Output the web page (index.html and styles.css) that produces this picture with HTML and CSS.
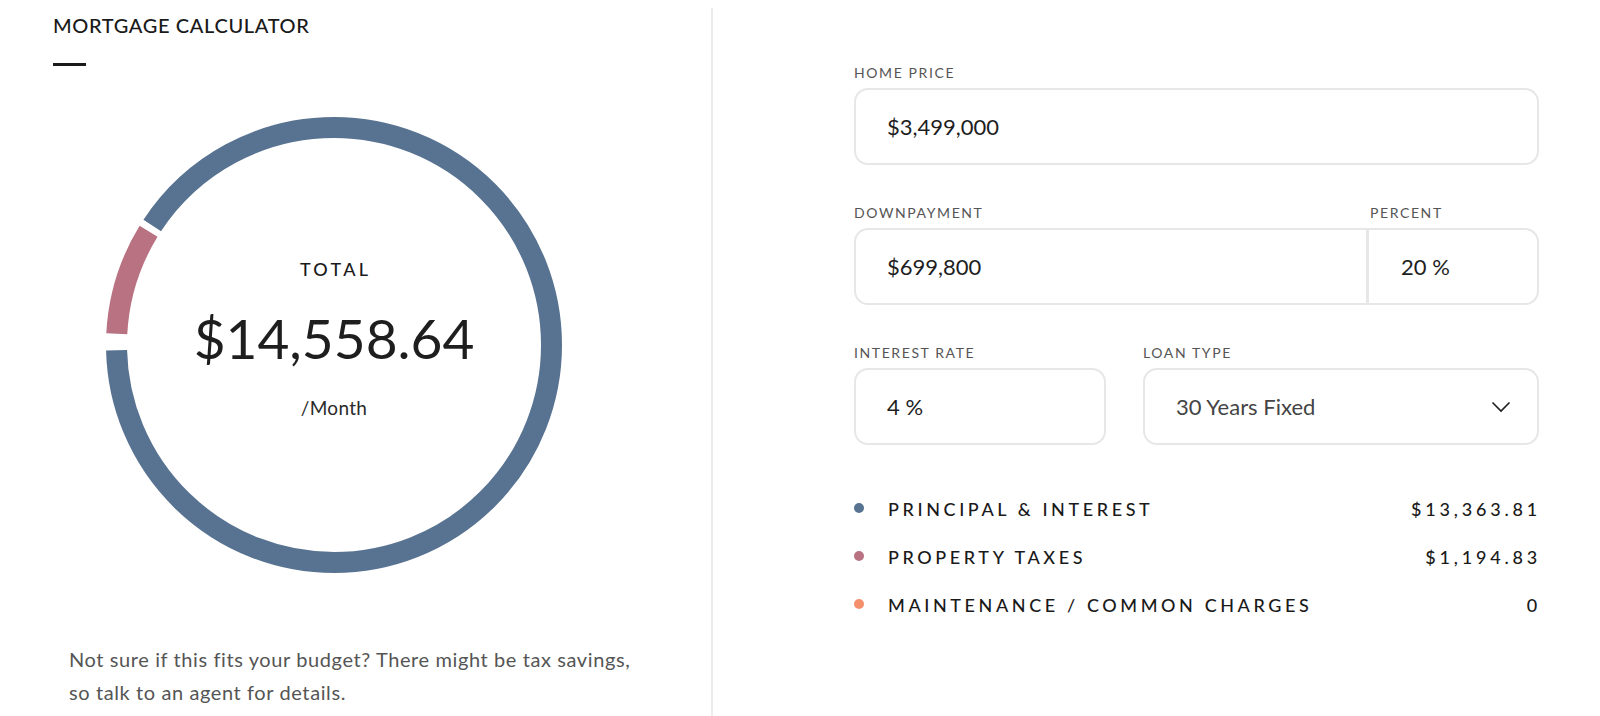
FILE: index.html
```html
<!DOCTYPE html>
<html lang="en">
<head>
<meta charset="utf-8">
<title>Mortgage Calculator</title>
<link rel="stylesheet" href="styles.css">
</head>
<body>
<div class="page">
  <section class="left">
    <h1 class="title">MORTGAGE CALCULATOR</h1>
    <div class="dash"></div>
    <div class="chart">
      <svg class="ring" viewBox="0 0 460 460" width="460" height="460">
        <g transform="rotate(180 230 230)">
          <circle class="seg seg-pink" cx="230" cy="230" r="217.5" stroke-dasharray="108.2 1258.4" stroke-dashoffset="-11.4"/>
          <circle class="seg seg-blue" cx="230" cy="230" r="217.5" stroke-dasharray="1234.4 132.2" stroke-dashoffset="-126.4"/>
        </g>
      </svg>
      <div class="total-label">TOTAL</div>
      <div class="total-amount">$14,558.64</div>
      <div class="total-unit">/Month</div>
    </div>
    <p class="note">Not sure if this fits your budget? There might be tax savings,<br>so talk to an agent for details.</p>
  </section>
  <div class="divider"></div>
  <section class="right">
    <div class="field">
      <div class="label">HOME PRICE</div>
      <div class="box"><span class="value">$3,499,000</span></div>
    </div>
    <div class="field">
      <div class="split-labels">
        <div class="label">DOWNPAYMENT</div>
        <div class="label">PERCENT</div>
      </div>
      <div class="box box-split">
        <div class="cell"><span class="value">$699,800</span></div>
        <div class="cell cell-percent"><span class="value">20 %</span></div>
      </div>
    </div>
    <div class="field-row">
      <div class="field">
        <div class="label">INTEREST RATE</div>
        <div class="box"><span class="value">4 %</span></div>
      </div>
      <div class="field">
        <div class="label">LOAN TYPE</div>
        <div class="box box-select">
          <span class="value value-select">30 Years Fixed</span>
          <svg class="chevron" width="20" height="12" viewBox="0 0 20 12"><path d="M1.5 1.5 L10 10 L18.5 1.5" fill="none" stroke="#1e1e1e" stroke-width="1.6"/></svg>
        </div>
      </div>
    </div>
    <ul class="legend">
      <li class="legend-row"><span class="dot dot-blue"></span><span class="legend-name">PRINCIPAL &amp; INTEREST</span><span class="legend-val">$13,363.81</span></li>
      <li class="legend-row"><span class="dot dot-pink"></span><span class="legend-name">PROPERTY TAXES</span><span class="legend-val">$1,194.83</span></li>
      <li class="legend-row"><span class="dot dot-orange"></span><span class="legend-name">MAINTENANCE / COMMON CHARGES</span><span class="legend-val">0</span></li>
    </ul>
  </section>
</div>
</body>
</html>
```

FILE: styles.css
```css
* { box-sizing: border-box; }

html, body {
  margin: 0;
  padding: 0;
  background: #ffffff;
}

body {
  font-family: "Lato", "Noto Sans", "Liberation Sans", sans-serif;
  color: #1e1e1e;
}

.page {
  display: grid;
  grid-template-columns: 711px 2px 1fr;
  min-height: 716px;
}

/* Left column */
.left {
  padding: 13px 0 0 53px;
}

.title {
  margin: 0;
  font-size: 20px;
  line-height: 24px;
  font-weight: 500;
  letter-spacing: 0.65px;
  color: #1a1a1a;
}

.dash {
  width: 33px;
  height: 3px;
  background: #1a1a1a;
  margin-top: 26px;
}

.chart {
  position: relative;
  width: 460px;
  height: 460px;
  margin: 49px 0 0 51px;
  padding-top: 143px;
  display: flex;
  flex-direction: column;
  align-items: center;
}

.ring {
  position: absolute;
  left: 0;
  top: 0;
}

.seg {
  fill: none;
  stroke-width: 21;
}

.seg-blue { stroke: #587391; }
.seg-pink { stroke: #b97282; }

.total-label {
  position: relative;
  font-size: 18px;
  line-height: 22px;
  font-weight: 500;
  letter-spacing: 3.3px;
  margin-right: -3.3px;
  color: #1a1a1a;
}

.total-amount {
  position: relative;
  margin-top: 25px;
  font-size: 55px;
  line-height: 66px;
  font-weight: 400;
  letter-spacing: 0;
  color: #1e1e1e;
}

.total-unit {
  position: relative;
  margin-top: 26px;
  font-size: 19px;
  line-height: 22px;
  letter-spacing: 0.3px;
  color: #2a2a2a;
}

.note {
  margin: 68px 0 0 16px;
  font-size: 20px;
  line-height: 33px;
  letter-spacing: 0.6px;
  color: #555555;
}

.divider {
  margin-top: 8px;
  background: #ececec;
}

/* Right column */
.right {
  padding: 65px 61px 0 141px;
}

.field {
  margin-bottom: 40px;
}

.label {
  font-size: 14px;
  line-height: 16px;
  letter-spacing: 1.6px;
  color: #555555;
  margin-bottom: 7px;
}

.box {
  height: 77px;
  border: 2px solid #e7e7e7;
  border-radius: 14px;
  display: flex;
  align-items: center;
  padding: 0 31px;
}

.value {
  font-size: 22px;
  color: #1e1e1e;
}

.split-labels {
  display: grid;
  grid-template-columns: 1fr 171px;
}

.split-labels .label:last-child {
  padding-left: 2px;
}

.box-split {
  padding: 0;
  display: grid;
  grid-template-columns: 1fr 171px;
  align-items: stretch;
}

.cell {
  display: flex;
  align-items: center;
  padding-left: 31px;
}

.cell-percent {
  border-left: 3px solid #e7e7e7;
  padding-left: 32px;
}

.field-row {
  display: grid;
  grid-template-columns: 252px 1fr;
  column-gap: 37px;
}

.field-row .field {
  margin-bottom: 0;
}

.box-select {
  justify-content: space-between;
  padding-right: 26px;
}

.value-select {
  color: #444444;
}

.chevron {
  display: block;
}

.legend {
  list-style: none;
  margin: 40px 0 0 0;
  padding: 0;
}

.legend-row {
  display: flex;
  align-items: center;
  height: 48px;
}

.dot {
  width: 10px;
  height: 10px;
  border-radius: 50%;
  margin: 0 24px 3px 0;
  flex: none;
}

.dot-blue { background: #587391; }
.dot-pink { background: #b97282; }
.dot-orange { background: #f4906c; }

.legend-name,
.legend-val {
  font-size: 18px;
  font-weight: 500;
  color: #1a1a1a;
}

.legend-name {
  letter-spacing: 3.6px;
}

.legend-val {
  margin-left: auto;
  letter-spacing: 3.8px;
  margin-right: -2px;
}
```
